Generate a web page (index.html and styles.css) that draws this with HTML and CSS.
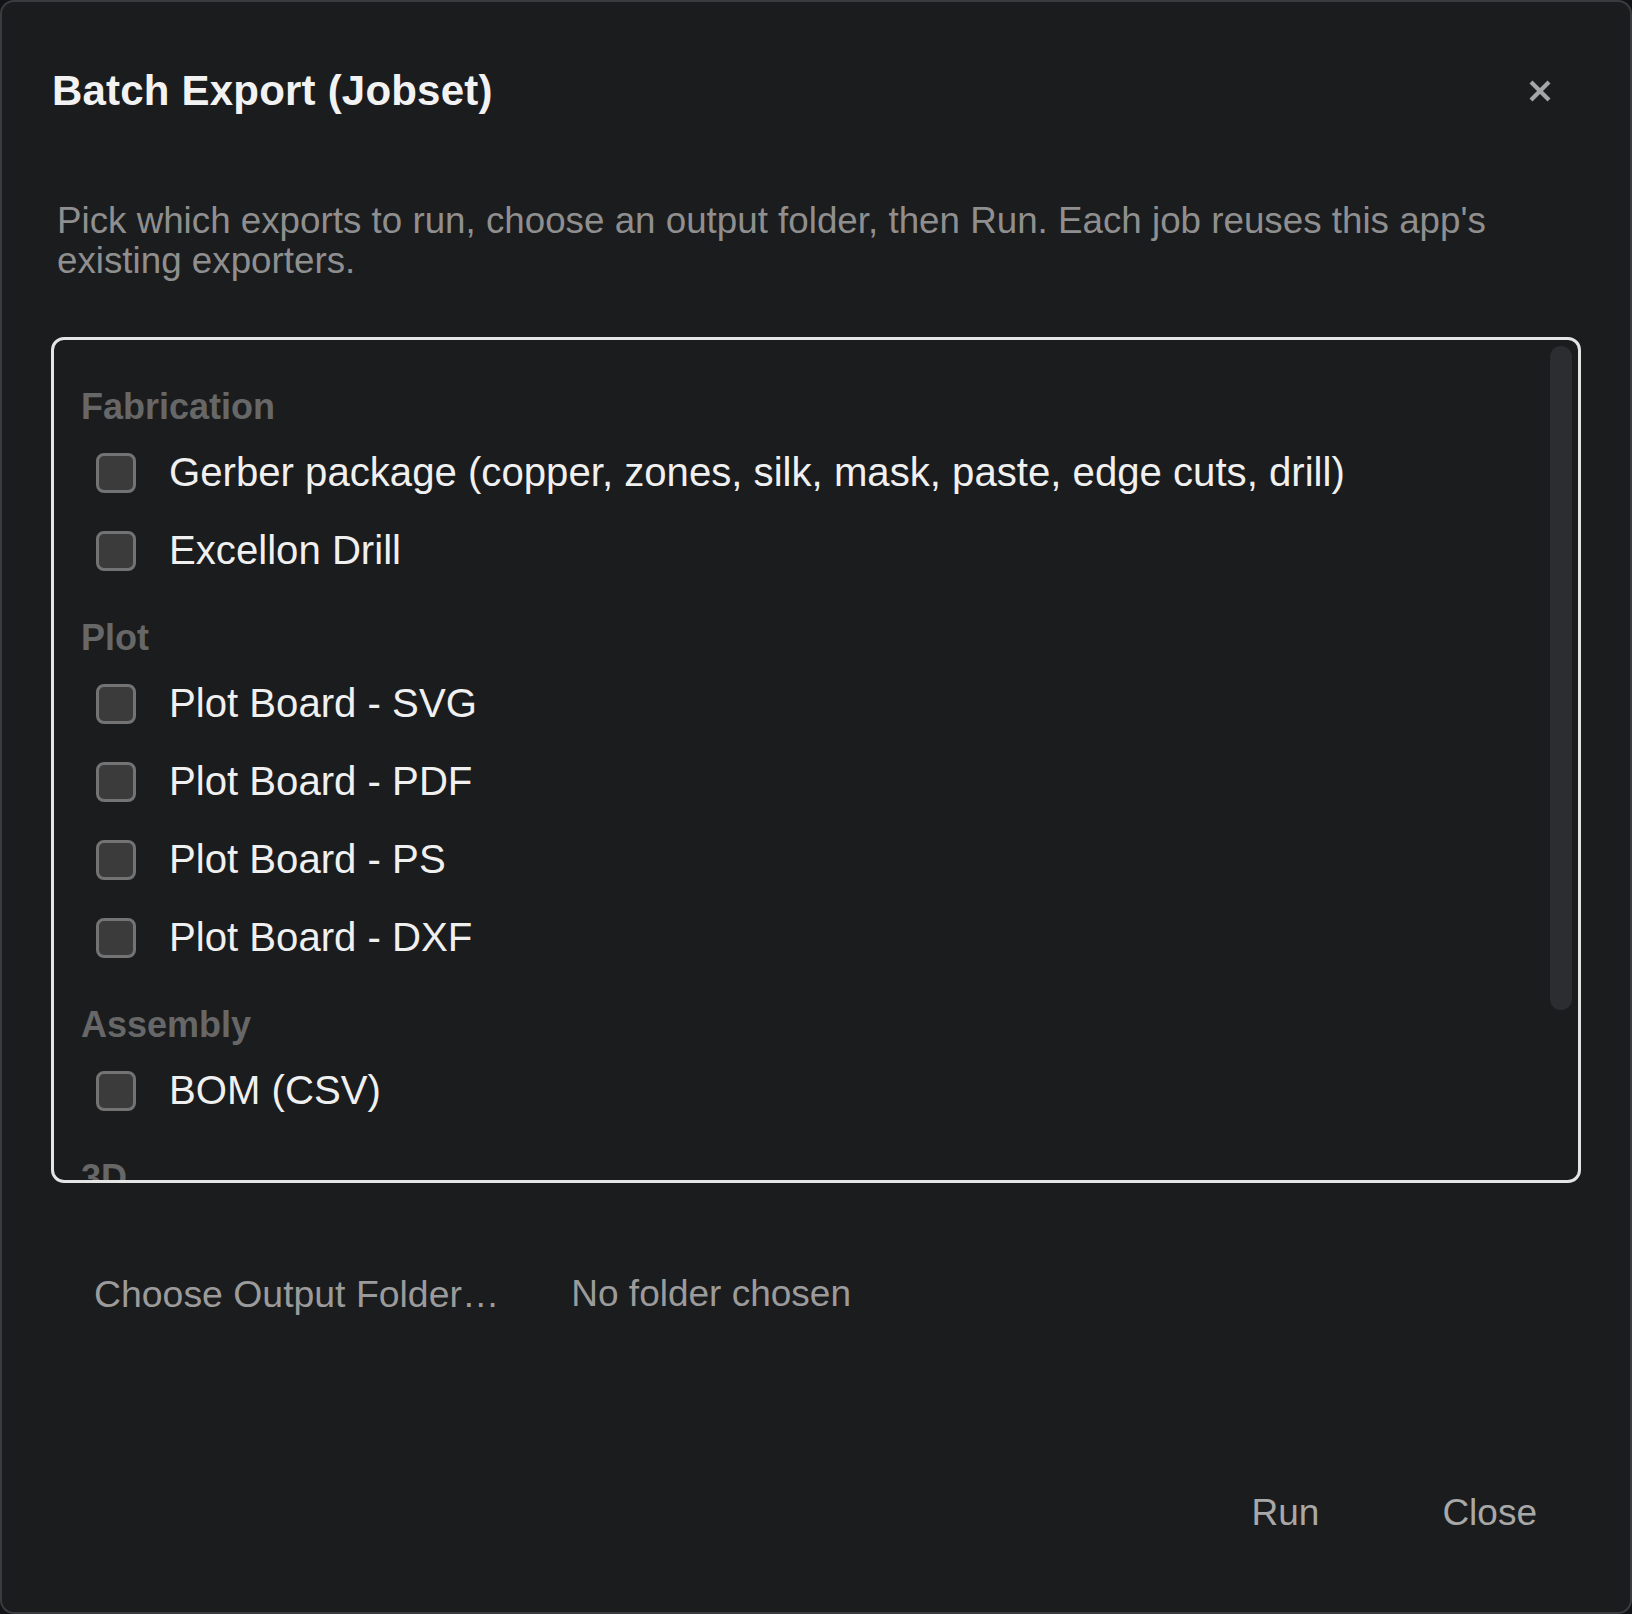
FILE: index.html
```html
<!DOCTYPE html>
<html lang="en">
<head>
<meta charset="utf-8">
<title>Batch Export (Jobset)</title>
<link rel="stylesheet" href="styles.css">
</head>
<body>
<div class="dialog">
  <header class="header">
    <h1 class="title">Batch Export (Jobset)</h1>
    <button class="close-x" aria-label="Close">
      <svg width="24" height="24" viewBox="0 0 24 24"><path d="M3 3 L21 21 M21 3 L3 21" stroke="#a6a6a6" stroke-width="4.2" fill="none"/></svg>
    </button>
  </header>
  <p class="desc">Pick which exports to run, choose an output folder, then Run. Each job reuses this app's existing exporters.</p>
  <div class="list-wrap">
    <div class="list">
      <section class="group">
        <h2 class="group-title">Fabrication</h2>
        <label class="row"><input type="checkbox" class="cb"><span class="label">Gerber package (copper, zones, silk, mask, paste, edge cuts, drill)</span></label>
        <label class="row"><input type="checkbox" class="cb"><span class="label">Excellon Drill</span></label>
      </section>
      <section class="group">
        <h2 class="group-title">Plot</h2>
        <label class="row"><input type="checkbox" class="cb"><span class="label">Plot Board - SVG</span></label>
        <label class="row"><input type="checkbox" class="cb"><span class="label">Plot Board - PDF</span></label>
        <label class="row"><input type="checkbox" class="cb"><span class="label">Plot Board - PS</span></label>
        <label class="row"><input type="checkbox" class="cb"><span class="label">Plot Board - DXF</span></label>
      </section>
      <section class="group">
        <h2 class="group-title">Assembly</h2>
        <label class="row"><input type="checkbox" class="cb"><span class="label">BOM (CSV)</span></label>
      </section>
      <section class="group">
        <h2 class="group-title">3D</h2>
      </section>
    </div>
    <div class="scroll-thumb"></div>
  </div>
  <div class="folder-row">
    <button class="folder-btn">Choose Output Folder…</button>
    <span class="folder-status">No folder chosen</span>
  </div>
  <footer class="footer">
    <button class="btn">Run</button>
    <button class="btn">Close</button>
  </footer>
</div>
</body>
</html>
```

FILE: styles.css
```css
html, body {
  margin: 0;
  padding: 0;
  background: #121314;
}

body {
  font-family: "Liberation Sans", Arial, Helvetica, sans-serif;
}

.dialog {
  box-sizing: border-box;
  width: 100vw;
  height: 100vh;
  background: #1b1c1e;
  border: 2px solid #3a3b3e;
  border-radius: 14px;
  padding: 0 49px;
  display: flex;
  flex-direction: column;
}

.header {
  display: flex;
  align-items: center;
  justify-content: space-between;
  padding-top: 64px;
  height: 50px;
}

.title {
  margin: 0;
  font-size: 42px;
  line-height: 50px;
  font-weight: 700;
  color: #f2f2f2;
  letter-spacing: 0.2px;
  padding-left: 1px;
}

.close-x {
  background: none;
  border: none;
  padding: 0;
  margin-right: 29px;
  width: 24px;
  height: 24px;
  display: flex;
  align-items: center;
  justify-content: center;
  cursor: pointer;
}

.desc {
  margin: 85px 0 0;
  padding-left: 6px;
  font-size: 36.75px;
  line-height: 40px;
  color: #8f8f8f;
}

.list-wrap {
  position: relative;
  margin-top: 56px;
}

.list {
  box-sizing: border-box;
  height: 846px;
  border: 3px solid #e4e4e4;
  border-radius: 13px;
  overflow: hidden;
  padding: 45px 0 23px 27px;
}

.scroll-thumb {
  position: absolute;
  top: 9px;
  right: 9px;
  width: 22px;
  height: 664px;
  border-radius: 11px;
  background: #2c2d30;
}

.group + .group {
  margin-top: 26px;
}

.group-title {
  margin: 0 0 5px;
  font-size: 36px;
  line-height: 44px;
  font-weight: 700;
  color: #676767;
}

.row {
  display: flex;
  align-items: center;
  height: 78px;
  padding-left: 15px;
}

.cb {
  appearance: none;
  -webkit-appearance: none;
  box-sizing: border-box;
  width: 40px;
  height: 40px;
  margin: 0 33px 0 0;
  border: 3px solid #737373;
  border-radius: 8px;
  background: #3b3b3b;
  flex: none;
}

.label {
  font-size: 40.15px;
  line-height: 46px;
  color: #f0f0f0;
}

.folder-row {
  margin-top: 91px;
  display: flex;
  align-items: center;
  gap: 72px;
  height: 40px;
}

.folder-btn {
  background: none;
  border: none;
  padding: 0 0 0 43px;
  font-family: inherit;
  font-size: 37.4px;
  line-height: 40px;
  color: #9b9b9b;
  white-space: nowrap;
}

.folder-status {
  font-size: 37px;
  line-height: 40px;
  color: #9b9b9b;
  white-space: nowrap;
}

.footer {
  margin-top: auto;
  margin-bottom: 79px;
  display: flex;
  justify-content: flex-end;
  gap: 35px;
  height: 40px;
}

.btn {
  background: none;
  border: none;
  padding: 0 44px;
  font-family: inherit;
  font-size: 37px;
  line-height: 40px;
  color: #a8a8a8;
}
```
